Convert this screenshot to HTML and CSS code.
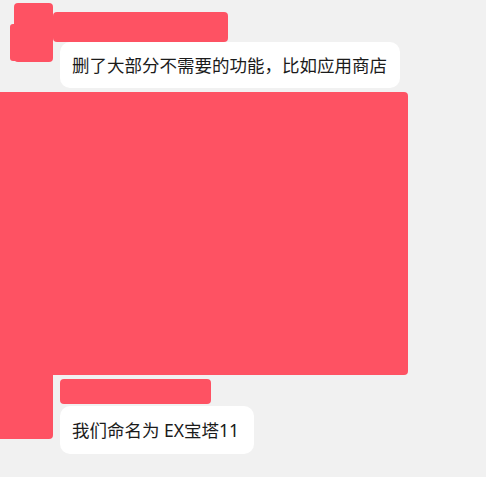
FILE: index.html
```html
<!DOCTYPE html>
<html lang="zh">
<head>
<meta charset="utf-8">
<link rel="stylesheet" href="styles.css">
</head>
<body>
<div class="chat">
  <div class="msg msg-first">
    <div class="avatar"></div>
    <div class="content">
      <div class="name name-first"></div>
      <div class="bubble bubble-first">删了大部分不需要的功能，比如应用商店</div>
    </div>
  </div>
  <div class="msg-second">
    <div class="image-block"></div>
    <div class="avatar-tall"></div>
    <div class="content content-second">
      <div class="name name-second"></div>
      <div class="bubble bubble-second">我们命名为 EX宝塔11</div>
    </div>
  </div>
</div>
</body>
</html>
```

FILE: styles.css
```css
html, body {
  margin: 0;
  padding: 0;
  background: #f1f1f1;
}
body {
  width: 486px;
  height: 477px;
  overflow: hidden;
  font-family: "Noto Sans", "Noto Sans CJK SC", sans-serif;
  color: #1b1b1b;
}
.chat {
  display: flex;
  flex-direction: column;
}
.msg-first {
  display: flex;
  align-items: flex-start;
  padding-top: 3px;
}
.avatar {
  position: relative;
  margin-left: 14px;
  width: 39px;
  height: 59px;
  background: #fe5263;
  border-radius: 4px;
}
.avatar::before {
  content: "";
  position: absolute;
  left: -4px;
  top: 21px;
  width: 10px;
  height: 37px;
  background: #fe5263;
  border-radius: 3px;
}
.content {
  display: flex;
  flex-direction: column;
  align-items: flex-start;
}
.msg-first .content {
  margin-top: 9px;
}
.name {
  background: #fe5263;
  border-radius: 4px;
}
.name-first {
  width: 175px;
  height: 30px;
}
.bubble {
  background: #ffffff;
  border-radius: 10px;
  font-size: 17.5px;
  line-height: 24px;
  padding: 0 12px;
  white-space: nowrap;
}
.bubble-first {
  margin-left: 7px;
  padding-top: 11px;
  padding-bottom: 11px;
  padding-right: 13px;
}
.msg-second {
  display: grid;
  grid-template-columns: 53px auto;
  justify-content: start;
  margin-top: 4px;
}
.image-block {
  grid-column: 1 / span 2;
  width: 408px;
  height: 283px;
  background: #fe5263;
  border-radius: 0 4px 4px 0;
}
.avatar-tall {
  height: 64px;
  background: #fe5263;
  border-radius: 0 0 4px 0;
}
.content-second {
  padding-left: 7px;
  padding-top: 4px;
}
.name-second {
  width: 151px;
  height: 25px;
  margin-bottom: 2px;
}
.bubble-second {
  padding-top: 12px;
  padding-bottom: 12px;
  padding-right: 15px;
}
```
